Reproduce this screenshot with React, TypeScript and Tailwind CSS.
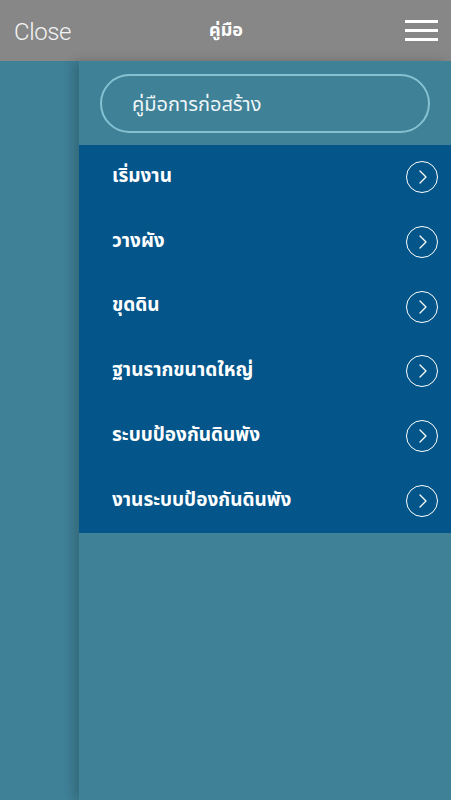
import { ChevronRight } from "lucide-react";

const items = [
  "เริ่มงาน",
  "วางผัง",
  "ขุดดิน",
  "ฐานรากขนาดใหญ่",
  "ระบบป้องกันดินพัง",
  "งานระบบป้องกันดินพัง",
];

const thai = { fontFamily: '"Noto Sans Thai", "Noto Sans", "Liberation Sans", sans-serif' };

export default function App() {
  return (
    <div className="flex h-[800px] w-[451px] flex-col overflow-hidden bg-[#3f8197]">
      {/* top bar */}
      <div className="flex h-[61px] shrink-0 items-center justify-between bg-[#878787] pl-[14px] pr-[13px]">
        <span
          className="mt-[2px] w-[70px] text-[24px] font-light tracking-[-0.4px] text-[#f4f4f4]"
          style={{ fontFamily: '"Roboto", "Liberation Sans", sans-serif' }}
        >
          Close
        </span>
        <span className="text-[18px] font-bold text-white" style={thai}>
          คู่มือ
        </span>
        <div className="flex w-[70px] flex-col items-end gap-[6px]">
          <span className="block h-[3px] w-[33px] bg-white" />
          <span className="block h-[3px] w-[33px] bg-white" />
          <span className="block h-[3px] w-[33px] bg-white" />
        </div>
      </div>

      <div className="flex flex-1">
        <div className="w-[79px] shrink-0 bg-[#3f8197]" />
        <div className="flex-1 bg-[#3f8197] pt-[13px] shadow-[-6px_0_10px_rgba(0,0,0,0.18)]">
          <div className="ml-[21px] mr-[21px] flex h-[59px] items-center rounded-full border-2 border-[#84c2d3] pl-[30px]">
            <span className="mt-[3px] text-[20px] text-[#eef6f8]" style={thai}>
              คู่มือการก่อสร้าง
            </span>
          </div>

          <div className="mt-[12px] bg-[#03558a]">
            {items.map((item) => (
              <div key={item} className="flex h-[64.7px] items-center justify-between pl-[33px] pr-[13px]">
                <span className="text-[19px] font-bold text-white" style={thai}>
                  {item}
                </span>
                <span className="flex h-[32px] w-[32px] items-center justify-center rounded-full border-[1.5px] border-white">
                  <ChevronRight className="ml-[1px] h-[24px] w-[24px] text-white" strokeWidth={1.3} />
                </span>
              </div>
            ))}
          </div>
        </div>
      </div>
    </div>
  );
}
